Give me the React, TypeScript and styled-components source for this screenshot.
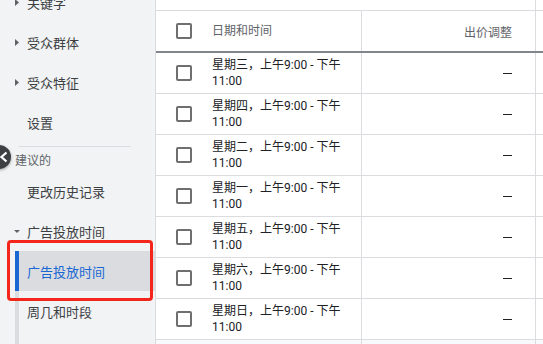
import React from 'react';
import styled, { createGlobalStyle } from 'styled-components';

const Global = createGlobalStyle`
  html, body { margin: 0; padding: 0; height: 100%; overflow: hidden; background: #fff; }
  body { font-family: Roboto, "Noto Sans CJK SC", "Noto Sans", sans-serif; -webkit-font-smoothing: antialiased; }
  #root { height: 100%; }
  * { box-sizing: border-box; }
`;

const Page = styled.div`
  position: relative;
  display: flex;
  height: 100%;
  overflow: hidden;
`;

const Sidebar = styled.nav`
  flex: 0 0 156px;
  display: flex;
  flex-direction: column;
  background: #f1f3f4;
  border-right: 1px solid #dadce0;
  overflow: hidden;
`;

const NavList = styled.div`
  margin-top: -18px;
  display: flex;
  flex-direction: column;
  flex: 1 0 auto;
`;

const NavItem = styled.div`
  height: 40px;
  flex: 0 0 40px;
  display: flex;
  align-items: center;
  padding-left: 12px;
  font-size: 13px;
  color: #3c4043;
  white-space: nowrap;
`;

const CaretSlot = styled.span`
  width: 15px;
  height: 16px;
  display: flex;
  align-items: center;
  flex: 0 0 15px;
`;

const Divider = styled.div`
  flex: 0 0 1px;
  margin: 4px 24px 0 19px;
  height: 1px;
  background: #dadce0;
`;

const SectionLabel = styled.div`
  flex: 0 0 auto;
  padding: 4px 0 0 15px;
  line-height: 20px;
  font-size: 12px;
  color: #5f6368;
`;

const ChildGroup = styled.div`
  margin-left: 15px;
  border-left: 4px solid #dadce0;
  flex: 1 0 auto;
  display: flex;
  flex-direction: column;
`;

const ChildItem = styled.div<{ $active?: boolean }>`
  height: 40px;
  flex: 0 0 40px;
  margin-left: -4px;
  border-left: 4px solid ${(p) => (p.$active ? '#1967d2' : 'transparent')};
  background: ${(p) => (p.$active ? '#dadce0' : 'transparent')};
  color: ${(p) => (p.$active ? '#1967d2' : '#3c4043')};
  padding-left: 8px;
  display: flex;
  align-items: center;
  font-size: 13px;
  white-space: nowrap;
`;

const Main = styled.main`
  flex: 1;
  overflow: hidden;
  background: #fff;
  display: flex;
  flex-direction: column;
`;

const Grid = styled.div`
  display: grid;
  grid-template-columns: 56px 149px 174px 200px;
  width: max-content;
  flex-shrink: 0;
`;

const TopStrip = styled(Grid)`
  height: 11px;
  border-bottom: 1px solid #dadce0;
`;

const HeaderRow = styled(Grid)`
  height: 42px;
  border-bottom: 2px solid #80868b;
`;

const Row = styled(Grid)`
  height: 41px;
  border-bottom: 1px solid #dadce0;
`;

const FooterRow = styled(Grid)`
  height: 40px;
  background: #f8f9fa;
`;

const CheckCell = styled.div`
  display: flex;
  align-items: center;
  justify-content: center;
`;

const TextCell = styled.div<{ $head?: boolean }>`
  display: flex;
  align-items: center;
  padding-right: 16px;
  font-size: 12px;
  line-height: 16px;
  color: ${(p) => (p.$head ? '#5f6368' : '#202124')};
`;

const NumCell = styled.div<{ $head?: boolean }>`
  display: flex;
  align-items: center;
  justify-content: flex-end;
  padding-right: 23px;
  border-left: 1px solid #dadce0;
  font-size: 12px;
  color: ${(p) => (p.$head ? '#5f6368' : '#202124')};
`;

const EdgeCell = styled.div`
  border-left: 1px solid #dadce0;
`;

const Box = styled.span`
  width: 16px;
  height: 16px;
  border: 2px solid #6f6f6f;
  border-radius: 2px;
  background: #fff;
`;

const Dash = styled.span`
  display: inline-block;
  width: 9px;
  height: 1px;
  background: #202124;
`;

const CollapseButton = styled.div`
  position: absolute;
  left: -13px;
  top: 145px;
  width: 24px;
  height: 24px;
  border-radius: 50%;
  background: #3c4043;
  box-shadow: 0 1px 3px rgba(0, 0, 0, 0.35);
  display: flex;
  align-items: center;
  justify-content: flex-end;
  padding-right: 2px;
`;

const Highlight = styled.div`
  position: absolute;
  left: 7px;
  top: 240px;
  width: 146px;
  height: 61px;
  border: 3px solid #f4261b;
  border-radius: 4px;
  pointer-events: none;
`;

const Spacer = styled.span`
  width: 15px;
  flex: 0 0 15px;
`;

const CaretRight = () => (
  <CaretSlot>
    <svg width="15" height="16" viewBox="0 0 15 16">
      <path d="M3 5 L7 8.5 L3 12 Z" fill="#5f6368" />
    </svg>
  </CaretSlot>
);

const CaretDown = () => (
  <CaretSlot>
    <svg width="15" height="16" viewBox="0 0 15 16">
      <path d="M2 7 L8 7 L5 10 Z" fill="#5f6368" />
    </svg>
  </CaretSlot>
);

const rows = ['星期三', '星期四', '星期二', '星期一', '星期五', '星期六', '星期日'];

export default function App() {
  return (
    <>
      <Global />
      <Page>
        <Sidebar>
          <NavList>
            <NavItem><CaretRight />关键字</NavItem>
            <NavItem><CaretRight />受众群体</NavItem>
            <NavItem><CaretRight />受众特征</NavItem>
            <NavItem><Spacer />设置</NavItem>
            <Divider />
            <SectionLabel>建议的</SectionLabel>
            <NavItem><Spacer />更改历史记录</NavItem>
            <NavItem><CaretDown />广告投放时间</NavItem>
            <ChildGroup>
              <ChildItem $active>广告投放时间</ChildItem>
              <ChildItem>周几和时段</ChildItem>
            </ChildGroup>
          </NavList>
        </Sidebar>
        <Main>
          <TopStrip>
            <div />
            <div />
            <div />
            <EdgeCell />
          </TopStrip>
          <HeaderRow>
            <CheckCell><Box /></CheckCell>
            <TextCell $head>日期和时间</TextCell>
            <NumCell $head>出价调整</NumCell>
            <EdgeCell />
          </HeaderRow>
          {rows.map((d) => (
            <Row key={d}>
              <CheckCell><Box /></CheckCell>
              <TextCell>{d}，上午9:00 - 下午 11:00</TextCell>
              <NumCell><Dash /></NumCell>
              <EdgeCell />
            </Row>
          ))}
          <FooterRow>
            <div />
            <div />
            <NumCell />
            <EdgeCell />
          </FooterRow>
        </Main>
        <CollapseButton>
          <svg width="10" height="12" viewBox="0 0 10 12">
            <path d="M7.5 1.5 L2.5 6 L7.5 10.5" stroke="#fff" strokeWidth="2.2" fill="none" />
          </svg>
        </CollapseButton>
        <Highlight />
      </Page>
    </>
  );
}
